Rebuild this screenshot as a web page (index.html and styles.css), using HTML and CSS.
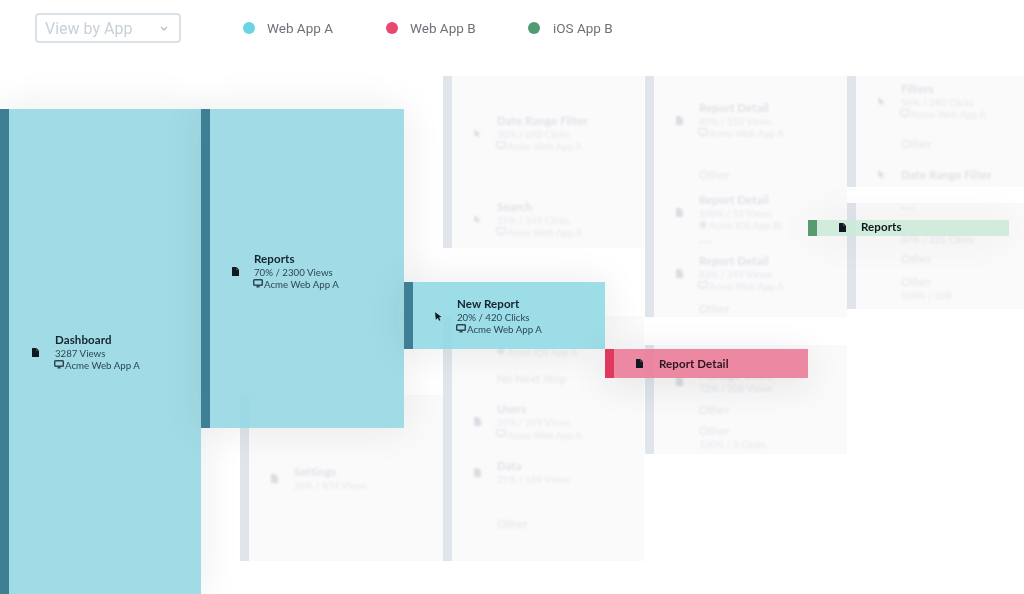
FILE: index.html
```html
<!DOCTYPE html>
<html lang="en">
<head>
<meta charset="utf-8">
<title>Path Explorer</title>
<link rel="stylesheet" href="styles.css">
</head>
<body>
<svg class="defs" width="0" height="0" aria-hidden="true">
  <symbol id="page" viewBox="0 0 7 9"><path d="M.6 0H4.4L7 2.6V8.4a.6.6 0 0 1-.6.6H.6A.6.6 0 0 1 0 8.4V.6A.6.6 0 0 1 .6 0Z" fill="currentColor"/><path d="M4.4 .3V2.6H6.8" fill="none" stroke="#fff" stroke-opacity=".45" stroke-width=".5"/></symbol>
  <symbol id="cursor" viewBox="0 0 9 11"><path d="M0 0 8.5 6.2 5.2 6.6 7 10.2 5.4 11 3.6 7.3 1.1 9.6Z" fill="currentColor"/></symbol>
  <symbol id="monitor" viewBox="0 0 10 9"><path d="M1.6.8H8.4A.9.9 0 0 1 9.3 1.7V5.4A.9.9 0 0 1 8.4 6.3H1.6A.9.9 0 0 1 .7 5.4V1.7A.9.9 0 0 1 1.6.8Z" fill="none" stroke="currentColor" stroke-width="1.5"/><path d="M3.2 8.6H6.8L6 6.3H4Z" fill="currentColor"/></symbol>
  <symbol id="apple" viewBox="0 0 9 9"><path d="M4.5 2C6 1.2 8 1.8 8 4.3 8 6.5 6.5 9 5.4 8.7 4.8 8.4 4.2 8.4 3.6 8.7 2.5 9 1 6.5 1 4.3 1 1.8 3 1.2 4.5 2ZM4.5 1.7C4.5.8 5.2.1 6 0 6 .9 5.4 1.6 4.5 1.7Z" fill="currentColor"/></symbol>
</svg>

<main class="page">
  <header class="toolbar">
    <div class="select"><span>View by App</span><svg class="chevron" viewBox="0 0 8 5" aria-hidden="true"><path d="M1 1 4 4 7 1" fill="none" stroke="currentColor" stroke-width="1.3"/></svg></div>
    <ul class="legend">
      <li class="legend-a"><i class="dot"></i>Web App A</li>
      <li class="legend-b"><i class="dot"></i>Web App B</li>
      <li class="legend-c"><i class="dot"></i>iOS App B</li>
    </ul>
  </header>

  <section class="diagram">
    <!-- faded nodes -->
    <div class="node faded n-settings">
      <div class="row grow"><svg class="ico"><use href="#page"/></svg><div class="txt"><b>Settings</b><span>26% / 854 Views</span></div></div>
    </div>

    <div class="node faded n-c3top">
      <div class="row h114"><svg class="ico"><use href="#cursor"/></svg><div class="txt"><b>Date Range Filter</b><span>30% / 690 Clicks</span><span class="app"><svg class="mon"><use href="#monitor"/></svg>Acme Web App A</span></div></div>
      <div class="row h58"><svg class="ico"><use href="#cursor"/></svg><div class="txt"><b>Search</b><span>15% / 345 Clicks</span><span class="app"><svg class="mon"><use href="#monitor"/></svg>Acme Web App A</span></div></div>
    </div>

    <div class="node faded n-c3bot">
      <div class="row h49 plain tail"><div class="txt"><span class="app"><svg class="mon"><use href="#apple"/></svg>Acme iOS App A</span></div></div>
      <div class="row h28 plain"><div class="txt"><b class="lite">No Next Step</b></div></div>
      <div class="row h57"><svg class="ico"><use href="#page"/></svg><div class="txt"><b>Users</b><span>35% / 299 Views</span><span class="app"><svg class="mon"><use href="#monitor"/></svg>Acme Web App A</span></div></div>
      <div class="row h45"><svg class="ico"><use href="#page"/></svg><div class="txt"><b>Data</b><span>21% / 189 Views</span></div></div>
      <div class="row h58 plain"><div class="txt"><b class="lite">Other</b></div></div>
    </div>

    <div class="node faded n-c4top">
      <div class="row h88"><svg class="ico"><use href="#page"/></svg><div class="txt"><b>Report Detail</b><span>80% / 552 Views</span><span class="app"><svg class="mon"><use href="#monitor"/></svg>Acme Web App A</span></div></div>
      <div class="row h22 plain"><div class="txt"><b class="lite">Other</b></div></div>
      <div class="row h52"><svg class="ico"><use href="#page"/></svg><div class="txt"><b>Report Detail</b><span>100% / 12 Views</span><span class="app"><svg class="mon"><use href="#apple"/></svg>Acme iOS App Bi</span></div></div>
      <div class="row h7 plain"><div class="txt"><b class="lite dots">•••</b></div></div>
      <div class="row h56"><svg class="ico"><use href="#page"/></svg><div class="txt"><b>Report Detail</b><span>83% / 349 Views</span><span class="app"><svg class="mon"><use href="#monitor"/></svg>Acme Web App A</span></div></div>
      <div class="row h16 plain"><div class="txt"><b class="lite">Other</b></div></div>
    </div>

    <div class="node faded n-c4bot">
      <div class="row h17"></div>
      <div class="row h38"><svg class="ico"><use href="#page"/></svg><div class="txt"><b>Manage Users</b><span>72% / 208 Views</span></div></div>
      <div class="row h20 plain"><div class="txt"><b class="lite">Other</b></div></div>
      <div class="row h34 plain"><div class="txt"><b class="lite">Other</b><span>100% / 3 Clicks</span></div></div>
    </div>

    <div class="node faded n-c5top">
      <div class="row h50"><svg class="ico"><use href="#cursor"/></svg><div class="txt"><b>Filters</b><span>56% / 280 Clicks</span><span class="app"><svg class="mon"><use href="#monitor"/></svg>Acme Web App A</span></div></div>
      <div class="row h36 plain"><div class="txt"><b class="lite">Other</b></div></div>
      <div class="row h25"><svg class="ico"><use href="#cursor"/></svg><div class="txt"><b>Date Range Filter</b></div></div>
    </div>

    <div class="node faded n-c5bot">
      <div class="row h10 plain"><div class="txt"><b class="lite dots">•••</b></div></div>
      <div class="row h37 plain tail-sub"><div class="txt"><span>67% / 221 Clicks</span></div></div>
      <div class="row h18 plain"><div class="txt"><b class="lite">Other</b></div></div>
      <div class="row h41 plain"><div class="txt"><b class="lite">Other</b><span>100% / 208</span></div></div>
    </div>

    <!-- highlighted path -->
    <div class="node blue n-dashboard">
      <div class="row grow"><svg class="ico"><use href="#page"/></svg><div class="txt"><b>Dashboard</b><span>3287 Views</span><span class="app"><svg class="mon"><use href="#monitor"/></svg>Acme Web App A</span></div></div>
    </div>
    <div class="node blue n-reports">
      <div class="row grow"><svg class="ico"><use href="#page"/></svg><div class="txt"><b>Reports</b><span>70% / 2300 Views</span><span class="app"><svg class="mon"><use href="#monitor"/></svg>Acme Web App A</span></div></div>
    </div>
    <div class="node blue n-new">
      <div class="row grow"><svg class="ico"><use href="#cursor"/></svg><div class="txt"><b>New Report</b><span>20% / 420 Clicks</span><span class="app"><svg class="mon"><use href="#monitor"/></svg>Acme Web App A</span></div></div>
    </div>
    <div class="node pink n-detail">
      <div class="row grow"><svg class="ico"><use href="#page"/></svg><div class="txt"><b>Report Detail</b></div></div>
    </div>
    <div class="node green n-green">
      <div class="row grow"><svg class="ico"><use href="#page"/></svg><div class="txt"><b>Reports</b></div></div>
    </div>
  </section>
</main>
</body>
</html>
```
FILE: styles.css
```css
* { box-sizing: border-box; }
html, body { margin: 0; padding: 0; background: #fff; }
.defs { position: absolute; }

.page {
  width: 1024px;
  height: 594px;
  overflow: hidden;
  font-family: "Lato", "Open Sans", sans-serif;
  color: #1d2c38;
  background: #fff;
}

.toolbar {
  height: 56px;
  padding: 13px 0 0 35px;
  display: flex;
  align-items: flex-start;
  font-family: "Roboto", "Liberation Sans", sans-serif;
  filter: blur(.35px);
}
.select {
  width: 146px;
  height: 30px;
  padding: 0 11px 0 8px;
  border: 2px solid #dbe2e7;
  border-radius: 4px;
  display: flex;
  align-items: center;
  justify-content: space-between;
  font-size: 16px;
  color: #c9d0d6;
}
.chevron { width: 8px; height: 5px; color: #b4bcc4; }
.legend {
  list-style: none;
  margin: 0;
  padding: 0 0 0 62px;
  height: 30px;
  display: flex;
  align-items: center;
  font-size: 13.5px;
  color: #6d7177;
}
.legend li { display: flex; align-items: center; gap: 12px; }
.legend-a { width: 143px; }
.legend-b { width: 142px; }
.legend .legend-c { gap: 13px; }
.dot { width: 12px; height: 12px; border-radius: 50%; }
.legend-a .dot { background: #6ad3e4; }
.legend-b .dot { background: #e9486f; }
.legend-c .dot { background: #519b72; }

.diagram { position: relative; width: 1024px; height: 538px; }

.node {
  position: absolute;
  display: flex;
  flex-direction: column;
  border-left: 9px solid;
}
.faded { background: #fafafb; border-left-color: #dfe5ea; color: #dfe2e6; }
.faded .row { filter: blur(.9px); }
.faded .txt span { color: #e6e8eb; }
.blue  { background: rgba(148, 215, 227, .88); border-left-color: #3f7f95; box-shadow: 0 0 38px rgba(30, 35, 40, .09); }
.pink  { background: rgba(236, 126, 155, .92); border-left-color: #e0385f; box-shadow: 0 6px 36px rgba(30, 35, 40, .11); }
.green { background: rgba(201, 233, 215, .86); border-left-color: #589b71; box-shadow: 0 0 40px rgba(30, 35, 40, .08); }
.n-new { background: rgba(143, 216, 229, .88); }

.row {
  display: flex;
  align-items: center;
  padding-left: 22px;
  gap: 16px;
  flex: none;
  min-height: 0;
}
.blue .row, .pink .row, .green .row { filter: blur(.3px); }
.row.plain { padding-left: 45px; }
.row.tail { align-items: flex-end; padding-bottom: 7px; }
.row.tail-sub { align-items: flex-end; padding-bottom: 5px; }
.grow { flex: 1; }

.ico { width: 7px; height: 9px; flex: none; color: #10181f; }
.faded .ico { color: #dadde1; }
.txt { display: flex; flex-direction: column; white-space: nowrap; }
.txt b { font-size: 11.5px; line-height: 14px; font-weight: 700; letter-spacing: .1px; }
.txt b.lite { font-weight: 400; color: #e4e6ea; }
.txt b.dots { font-size: 6px; letter-spacing: 1px; }
.txt span { font-size: 9.7px; line-height: 12.5px; color: #2d4652; }
.blue .txt b { color: #15242f; }
.pink .txt b { color: #2c1620; }
.green .txt b { color: #10181f; }
.txt .app { display: flex; align-items: center; gap: 1px; }
.mon { width: 10px; height: 9px; flex: none; margin: -2px 0 0 -1px; }

.n-dashboard .row { padding: 1px 0 0 23px; }
.n-reports .row { padding-top: 5px; gap: 15px; }
.n-new .row { padding-top: 1px; gap: 15px; }
.n-green .row { padding-bottom: 2px; gap: 15px; }

.h7 { height: 7px; } .h10 { height: 10px; } .h16 { height: 16px; } .h17 { height: 17px; }
.h18 { height: 18px; } .h20 { height: 20px; } .h22 { height: 22px; } .h25 { height: 25px; }
.h28 { height: 28px; } .h34 { height: 34px; } .h36 { height: 36px; } .h37 { height: 37px; }
.h38 { height: 38px; } .h41 { height: 41px; } .h45 { height: 45px; } .h49 { height: 49px; }
.h50 { height: 50px; } .h52 { height: 52px; } .h56 { height: 56px; } .h57 { height: 57px; }
.h58 { height: 58px; } .h88 { height: 88px; } .h114 { height: 114px; }

/* free-canvas positions of the diagram's nodes */
.n-dashboard { left: 0;     top: 53px;  width: 201px; height: 485px; }
.n-reports   { left: 201px; top: 53px;  width: 203px; height: 319px; }
.n-new       { left: 404px; top: 226px; width: 201px; height: 67px; }
.n-detail    { left: 605px; top: 293px; width: 203px; height: 29px; }
.n-green     { left: 808px; top: 164px; width: 201px; height: 16px; }
.n-settings  { left: 240px; top: 339px; width: 203px; height: 166px; }
.n-c3top     { left: 443px; top: 20px;  width: 201px; height: 172px; }
.n-c3bot     { left: 443px; top: 260px; width: 201px; height: 245px; }
.n-c4top     { left: 645px; top: 20px;  width: 202px; height: 241px; }
.n-c4bot     { left: 645px; top: 289px; width: 202px; height: 109px; }
.n-c5top     { left: 847px; top: 20px;  width: 177px; height: 111px; }
.n-c5bot     { left: 847px; top: 147px; width: 177px; height: 106px; }
```
